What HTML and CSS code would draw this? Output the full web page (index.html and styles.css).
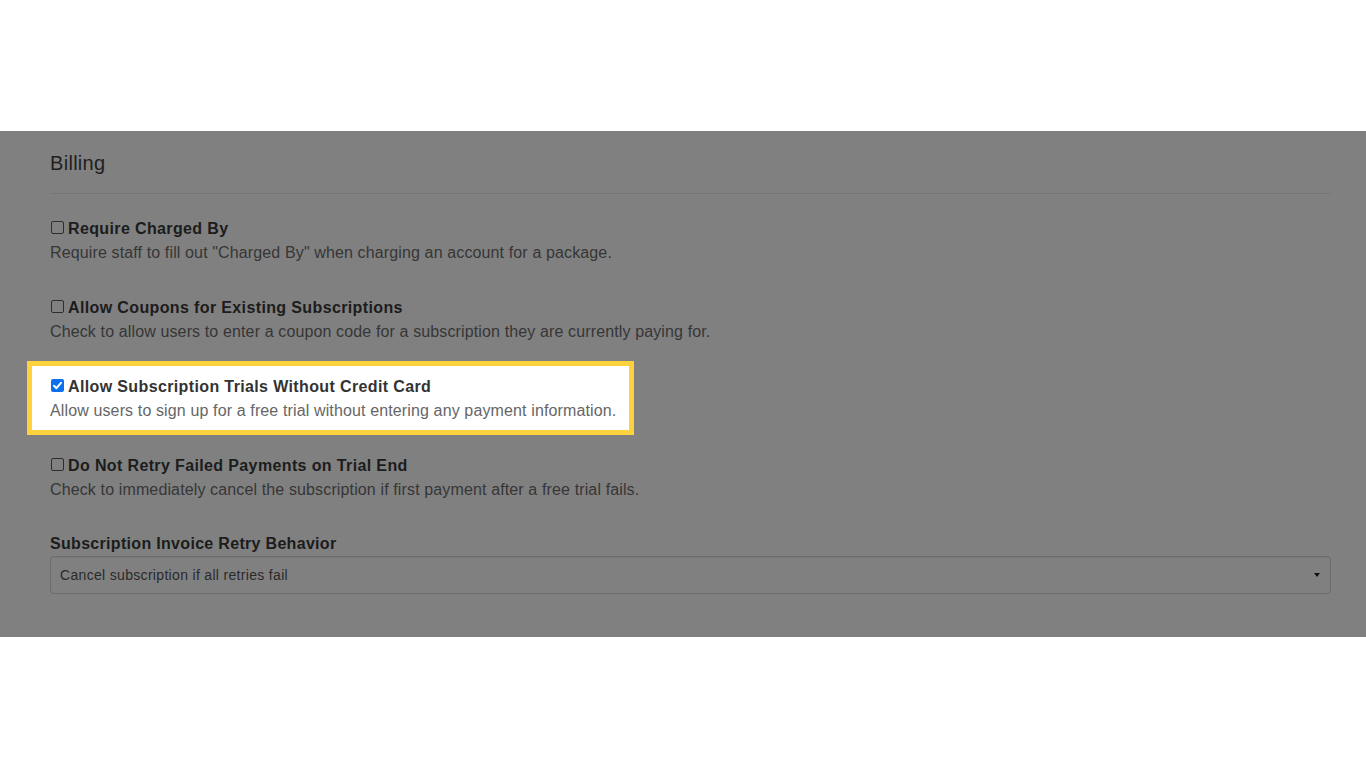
FILE: index.html
```html
<!DOCTYPE html>
<html lang="en">
<head>
<meta charset="utf-8">
<title>Billing</title>
<link rel="stylesheet" href="styles.css">
</head>
<body>
<div class="top-space"></div>
<section class="panel">
  <h2 class="title">Billing</h2>
  <hr class="rule">
  <div class="options">
    <div class="option">
      <div class="label"><span class="cb"></span>Require Charged By</div>
      <div class="desc">Require staff to fill out "Charged By" when charging an account for a package.</div>
    </div>
    <div class="option">
      <div class="label"><span class="cb"></span>Allow Coupons for Existing Subscriptions</div>
      <div class="desc">Check to allow users to enter a coupon code for a subscription they are currently paying for.</div>
    </div>
    <div class="option highlight">
      <div class="label"><span class="cb checked"><svg viewBox="0 0 13 13" width="13" height="13"><path d="M3 6.8 L5.4 9.2 L10 3.8" fill="none" stroke="#fff" stroke-width="2" stroke-linecap="round" stroke-linejoin="round"/></svg></span>Allow Subscription Trials Without Credit Card</div>
      <div class="desc">Allow users to sign up for a free trial without entering any payment information.</div>
    </div>
    <div class="option">
      <div class="label"><span class="cb"></span>Do Not Retry Failed Payments on Trial End</div>
      <div class="desc">Check to immediately cancel the subscription if first payment after a free trial fails.</div>
    </div>
  </div>
  <div class="field">
    <div class="field-label">Subscription Invoice Retry Behavior</div>
    <div class="select"><span>Cancel subscription if all retries fail</span><span class="caret"></span></div>
  </div>
</section>
</body>
</html>
```
FILE: styles.css
```css
html, body {
  margin: 0;
  padding: 0;
  background: #ffffff;
  font-family: "Liberation Sans", Arial, Helvetica, sans-serif;
}
.top-space {
  height: 131px;
}
.panel {
  background: #808080;
  padding: 20px 35px 43px 50px;
  color: #1e1e1e;
}
.title {
  margin: 0;
  font-size: 20px;
  line-height: 24px;
  font-weight: normal;
  letter-spacing: 0.3px;
  color: #1f1f1f;
}
.rule {
  margin: 18px 0 0 0;
  border: 0;
  border-top: 1px solid #767676;
  height: 0;
}
.options {
  display: flex;
  flex-direction: column;
  align-items: flex-start;
  gap: 31px;
  margin-top: 23px;
}
.label {
  display: flex;
  align-items: center;
  font-size: 16px;
  line-height: 24px;
  font-weight: bold;
  letter-spacing: 0.37px;
  color: #1c1c1c;
}
.desc {
  font-size: 16px;
  line-height: 24px;
  letter-spacing: 0.13px;
  color: #363636;
}
.cb {
  box-sizing: border-box;
  width: 13px;
  height: 13px;
  margin: 0 4px 0 1px;
  border: 1px solid #2e2e2e;
  border-radius: 2px;
  background: #808080;
  flex: none;
  position: relative;
  top: -2px;
}
.cb.checked {
  border: 0;
  background: #0b6ff0;
}
.cb.checked svg {
  display: block;
}
.highlight {
  background: #ffffff;
  border: 5px solid #fdd23c;
  margin: -14px 0 -12px -23px;
  padding: 9px 13px 7px 18px;
}
.highlight .label {
  color: #333333;
}
.highlight .desc {
  color: #666666;
}
.field {
  margin-top: 30px;
}
.field-label {
  font-size: 16px;
  line-height: 24px;
  font-weight: bold;
  letter-spacing: 0.31px;
  color: #1c1c1c;
}
.select {
  box-sizing: border-box;
  height: 38px;
  border: 1px solid #6c6c6c;
  border-radius: 4px;
  background: #808080;
  box-shadow: inset 0 1px 1px rgba(0,0,0,0.04);
  display: flex;
  align-items: center;
  justify-content: space-between;
  padding: 0 10px 0 9px;
  font-size: 14px;
  letter-spacing: 0.32px;
  color: #2a2a2a;
}
.caret {
  width: 0;
  height: 0;
  border-left: 3.5px solid transparent;
  border-right: 3.5px solid transparent;
  border-top: 4px solid #111;
}
```
